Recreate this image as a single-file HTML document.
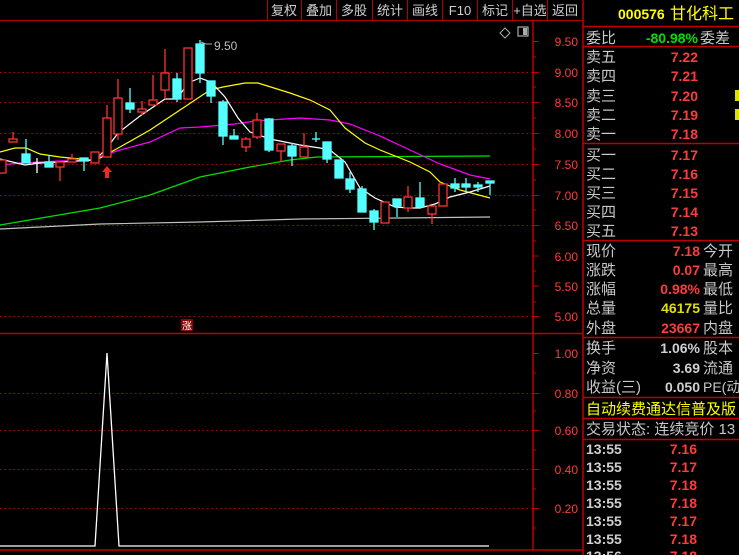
<!DOCTYPE html><html><head><meta charset="utf-8"><style>
html,body{margin:0;padding:0;background:#000;width:739px;height:555px;overflow:hidden}
svg{display:block}
text{font-family:"Liberation Sans","Noto Sans CJK SC",sans-serif}
.l{fill:#c8c8c8;font-size:15px}
.v{fill:#ff3b3b;font-size:14px;font-weight:bold;text-anchor:end}
.ax{fill:#ff3b3b;font-size:12px;text-anchor:end}
.tb{fill:#d0d0d0;font-size:13px;text-anchor:middle}
</style></head><body>
<svg width="739" height="555" viewBox="0 0 739 555" xmlns="http://www.w3.org/2000/svg">
<rect width="739" height="555" fill="#000"/>
<!-- toolbar -->
<g stroke="#b00000" stroke-width="1">
<line x1="0" y1="20.5" x2="583" y2="20.5"/>
<line x1="267.5" y1="0" x2="267.5" y2="20"/><line x1="301.5" y1="0" x2="301.5" y2="20"/><line x1="336.5" y1="0" x2="336.5" y2="20"/><line x1="372.5" y1="0" x2="372.5" y2="20"/><line x1="407.5" y1="0" x2="407.5" y2="20"/><line x1="442.5" y1="0" x2="442.5" y2="20"/><line x1="477.5" y1="0" x2="477.5" y2="20"/><line x1="512.5" y1="0" x2="512.5" y2="20"/><line x1="547.5" y1="0" x2="547.5" y2="20"/>
</g>
<g class="tb"><text x="284" y="15">复权</text><text x="319" y="15">叠加</text><text x="354" y="15">多股</text><text x="390" y="15">统计</text><text x="425" y="15">画线</text><text x="460" y="15">F10</text><text x="495" y="15">标记</text><text x="530" y="15">+自选</text><text x="565" y="15">返回</text></g>
<!-- frame -->
<g stroke="#c00000" stroke-width="1.5" fill="none">
<line x1="533" y1="21" x2="533" y2="550"/>
<line x1="583" y1="0" x2="583" y2="555"/>
<line x1="0" y1="333.5" x2="583" y2="333.5"/>
<line x1="0" y1="550" x2="583" y2="550"/>
</g>
<!-- grid -->
<g stroke="#c00000" stroke-width="1" stroke-dasharray="1.5,3">
<line x1="0" y1="72.5" x2="533" y2="72.5"/><line x1="0" y1="102.5" x2="533" y2="102.5"/><line x1="0" y1="133.5" x2="533" y2="133.5"/><line x1="0" y1="164.5" x2="533" y2="164.5"/><line x1="0" y1="195.5" x2="533" y2="195.5"/><line x1="0" y1="225.5" x2="533" y2="225.5"/><line x1="0" y1="316.5" x2="533" y2="316.5"/>
<line x1="0" y1="393.5" x2="533" y2="393.5"/><line x1="0" y1="430.5" x2="533" y2="430.5"/><line x1="0" y1="469.5" x2="533" y2="469.5"/><line x1="0" y1="508.5" x2="533" y2="508.5"/>
</g>
<!-- axis ticks -->
<g stroke="#c00000" stroke-width="1">
<line x1="533" y1="41.5" x2="539" y2="41.5"/><line x1="533" y1="57" x2="536" y2="57"/><line x1="533" y1="72.5" x2="539" y2="72.5"/><line x1="533" y1="87" x2="536" y2="87"/><line x1="533" y1="102.5" x2="539" y2="102.5"/><line x1="533" y1="118" x2="536" y2="118"/><line x1="533" y1="133.5" x2="539" y2="133.5"/><line x1="533" y1="149" x2="536" y2="149"/><line x1="533" y1="164.5" x2="539" y2="164.5"/><line x1="533" y1="180" x2="536" y2="180"/><line x1="533" y1="195.5" x2="539" y2="195.5"/><line x1="533" y1="210" x2="536" y2="210"/><line x1="533" y1="225.5" x2="539" y2="225.5"/><line x1="533" y1="241" x2="536" y2="241"/><line x1="533" y1="256" x2="539" y2="256"/><line x1="533" y1="271" x2="536" y2="271"/><line x1="533" y1="286" x2="539" y2="286"/><line x1="533" y1="302" x2="536" y2="302"/><line x1="533" y1="316.5" x2="539" y2="316.5"/>
<line x1="533" y1="353.5" x2="539" y2="353.5"/><line x1="533" y1="373" x2="536" y2="373"/><line x1="533" y1="393.5" x2="539" y2="393.5"/><line x1="533" y1="411" x2="536" y2="411"/><line x1="533" y1="430.5" x2="539" y2="430.5"/><line x1="533" y1="450" x2="536" y2="450"/><line x1="533" y1="469.5" x2="539" y2="469.5"/><line x1="533" y1="489" x2="536" y2="489"/><line x1="533" y1="508.5" x2="539" y2="508.5"/><line x1="533" y1="528" x2="536" y2="528"/>
</g>
<g class="ax"><text x="578" y="46">9.50</text><text x="578" y="77">9.00</text><text x="578" y="107">8.50</text><text x="578" y="138">8.00</text><text x="578" y="169">7.50</text><text x="578" y="200">7.00</text><text x="578" y="230">6.50</text><text x="578" y="261">6.00</text><text x="578" y="291">5.50</text><text x="578" y="321">5.00</text>
<text x="578" y="358">1.00</text><text x="578" y="398">0.80</text><text x="578" y="435">0.60</text><text x="578" y="474">0.40</text><text x="578" y="513">0.20</text></g>
<!-- icons -->
<path d="M505 28 L510 33 L505 38 L500 33 Z" fill="none" stroke="#aaa" stroke-width="1"/>
<rect x="518" y="27" width="10" height="9" fill="none" stroke="#aaa" stroke-width="1.2"/><rect x="523" y="28" width="4" height="7" fill="#aaa"/>
<!-- MA lines -->
<g fill="none" stroke-width="1.2">
<polyline stroke="#c0c0c0" points="0,229 100,224 200,222 300,219 400,218 490,217"/>
<polyline stroke="#00e000" points="0,225 100,208 150,195 200,177 250,167 290,160 317,157 490,156"/>
<polyline stroke="#ff00ff" points="0,165 20,163 40,162 60,161 90,160 120,150 150,142 180,128 200,127 235,124 255,121 270,120 300,118 330,120 350,124 380,136 410,150 440,164 470,175 490,179"/>
<polyline stroke="#ffff00" points="0,152 15,148 26,148 40,154 60,157 90,160 100,158 120,147 150,130 180,110 210,90 223,87 245,83 258,83 290,93 310,100 330,110 345,128 365,143 380,150 410,162 430,172 440,182 460,190 475,194 490,198"/>
<polyline stroke="#ffffff" points="0,159 25,165 40,163 60,162 95,160 107,148 118,133 140,116 165,99 177,99 188,83 200,78 211,82 225,97 238,118 250,132 270,139 300,145 320,148 330,150 345,162 360,188 375,198 395,207 410,208 420,208 435,204 450,197 470,192 490,186"/>
</g>
<!-- candles -->
<g stroke-width="1.3">
<g stroke="#ff3232" fill="#000">
<rect x="-2" y="160" width="8" height="13"/>
<line x1="13" y1="132" x2="13" y2="139"/><rect x="9" y="139" width="8" height="3"/>
<line x1="60" y1="167" x2="60" y2="181"/><rect x="56" y="162" width="8" height="5"/>
<line x1="72" y1="154" x2="72" y2="159"/><rect x="68" y="159" width="8" height="3"/>
<rect x="91" y="152" width="8" height="11"/>
<line x1="107" y1="105" x2="107" y2="118"/><rect x="103" y="118" width="8" height="39"/>
<line x1="118" y1="79" x2="118" y2="98"/><line x1="118" y1="134" x2="118" y2="140"/><rect x="114" y="98" width="8" height="36"/>
<line x1="142" y1="101" x2="142" y2="109"/><line x1="142" y1="112" x2="142" y2="115"/><rect x="138" y="109" width="8" height="3"/>
<line x1="153" y1="75" x2="153" y2="100"/><rect x="149" y="100" width="8" height="5"/>
<line x1="165" y1="49" x2="165" y2="73"/><line x1="165" y1="90" x2="165" y2="99"/><rect x="161" y="73" width="8" height="17"/>
<rect x="184" y="48" width="8" height="51"/>
<line x1="246" y1="137" x2="246" y2="139"/><line x1="246" y1="147" x2="246" y2="152"/><rect x="242" y="139" width="8" height="8"/>
<line x1="257" y1="113" x2="257" y2="120"/><line x1="257" y1="137" x2="257" y2="139"/><rect x="253" y="120" width="8" height="17"/>
<line x1="281" y1="151" x2="281" y2="162"/><rect x="277" y="144" width="8" height="7"/>
<line x1="304" y1="133" x2="304" y2="147"/><rect x="300" y="147" width="8" height="10"/>
<rect x="381" y="202" width="8" height="21"/>
<line x1="408" y1="186" x2="408" y2="197"/><line x1="408" y1="208" x2="408" y2="212"/><rect x="404" y="197" width="8" height="11"/>
<line x1="432" y1="214" x2="432" y2="224"/><rect x="428" y="206" width="8" height="8"/>
<rect x="439" y="184" width="8" height="22"/>
</g>
<g stroke="#54ffff" fill="#54ffff">
<line x1="26" y1="139" x2="26" y2="163"/><rect x="22" y="154" width="8" height="9"/>
<line x1="49" y1="156" x2="49" y2="167"/><rect x="45" y="162" width="8" height="5"/>
<line x1="84" y1="158" x2="84" y2="171"/><rect x="80" y="158" width="8" height="3"/>
<line x1="130" y1="88" x2="130" y2="113"/><rect x="126" y="103" width="8" height="6"/>
<line x1="177" y1="73" x2="177" y2="102"/><rect x="173" y="79" width="8" height="20"/>
<line x1="200" y1="40" x2="200" y2="83"/><rect x="196" y="44" width="8" height="29"/>
<line x1="211" y1="81" x2="211" y2="103"/><rect x="207" y="81" width="8" height="15"/>
<line x1="223" y1="100" x2="223" y2="145"/><rect x="219" y="102" width="8" height="34"/>
<line x1="234" y1="129" x2="234" y2="139"/><rect x="230" y="136" width="8" height="3"/>
<line x1="269" y1="118" x2="269" y2="152"/><rect x="265" y="119" width="8" height="31"/>
<line x1="292" y1="143" x2="292" y2="166"/><rect x="288" y="146" width="8" height="10"/>
<line x1="316" y1="132" x2="316" y2="142"/><line x1="312" y1="139" x2="320" y2="139"/>
<line x1="327" y1="142" x2="327" y2="163"/><rect x="323" y="142" width="8" height="17"/>
<rect x="335" y="160" width="8" height="18"/>
<line x1="350" y1="172" x2="350" y2="193"/><rect x="346" y="179" width="8" height="10"/>
<line x1="362" y1="186" x2="362" y2="212"/><rect x="358" y="189" width="8" height="23"/>
<line x1="374" y1="209" x2="374" y2="230"/><rect x="370" y="211" width="8" height="11"/>
<line x1="397" y1="199" x2="397" y2="217"/><rect x="393" y="199" width="8" height="7"/>
<line x1="420" y1="182" x2="420" y2="208"/><rect x="416" y="198" width="8" height="9"/>
<line x1="455" y1="178" x2="455" y2="192"/><rect x="451" y="184" width="8" height="4"/>
<line x1="466" y1="178" x2="466" y2="192"/><rect x="462" y="184" width="8" height="3"/>
<line x1="478" y1="182" x2="478" y2="192"/><rect x="474" y="185" width="8" height="2"/>
<line x1="490" y1="181" x2="490" y2="195"/><rect x="486" y="181" width="8" height="2"/>
</g>
<g stroke="#fff"><line x1="37" y1="158" x2="37" y2="173"/><line x1="33" y1="163" x2="41" y2="163"/></g>
</g>
<!-- arrow -->
<path d="M107 166 L112 172 L109 172 L109 178 L105 178 L105 172 L102 172 Z" fill="#ff2020"/>
<!-- 9.50 label -->
<path d="M201 42 L206 44 L212 44" stroke="#aaa" fill="none" stroke-width="1"/>
<text x="214" y="50" fill="#c0c0c0" font-size="12">9.50</text>
<!-- 涨 marker -->
<rect x="181" y="319" width="12" height="12" fill="#8b0000"/>
<text x="187" y="329.5" fill="#fff" font-size="10" text-anchor="middle">涨</text>
<!-- lower line -->
<polyline fill="none" stroke="#fff" stroke-width="1.3" points="0,546 95,546 107,353 119,546 489,546"/>
<!-- right panel -->
<g stroke="#c00000" stroke-width="1.5">
<line x1="583" y1="26.5" x2="739" y2="26.5"/><line x1="583" y1="46.5" x2="739" y2="46.5"/><line x1="583" y1="143.5" x2="739" y2="143.5"/><line x1="583" y1="240.5" x2="739" y2="240.5"/><line x1="583" y1="337.5" x2="739" y2="337.5"/><line x1="583" y1="397.5" x2="739" y2="397.5"/><line x1="583" y1="418.5" x2="739" y2="418.5"/><line x1="583" y1="439.5" x2="739" y2="439.5"/>
</g>
<text x="618" y="19" fill="#ffff00" font-size="14" font-weight="bold">000576</text>
<text x="670" y="19" fill="#ffff00" font-size="16">甘化科工</text>
<g class="l">
<text x="586" y="43">委比</text><text x="700" y="43">委差</text>
<text x="586" y="62">卖五</text><text x="586" y="81">卖四</text><text x="586" y="101">卖三</text><text x="586" y="120">卖二</text><text x="586" y="139">卖一</text>
<text x="586" y="160">买一</text><text x="586" y="179">买二</text><text x="586" y="198">买三</text><text x="586" y="217">买四</text><text x="586" y="236">买五</text>
<text x="586" y="256">现价</text><text x="703" y="256">今开</text>
<text x="586" y="275">涨跌</text><text x="703" y="275">最高</text>
<text x="586" y="294">涨幅</text><text x="703" y="294">最低</text>
<text x="586" y="313">总量</text><text x="703" y="313">量比</text>
<text x="586" y="333">外盘</text><text x="703" y="333">内盘</text>
<text x="586" y="353">换手</text><text x="703" y="353">股本</text>
<text x="586" y="373">净资</text><text x="703" y="373">流通</text>
<text x="586" y="392">收益(三)</text><text x="703" y="392" font-size="14">PE(动</text>
<text x="586" y="434">交易状态: 连续竞价 13</text>
</g>
<text x="586" y="414" fill="#ffff00" font-size="15">自动续费通达信普及版</text>
<text x="698" y="43" fill="#00e000" font-size="14" font-weight="bold" text-anchor="end">-80.98%</text>
<g class="v">
<text x="698" y="62">7.22</text><text x="698" y="81">7.21</text><text x="698" y="101">7.20</text><text x="698" y="120">7.19</text><text x="698" y="139">7.18</text>
<text x="698" y="160">7.17</text><text x="698" y="179">7.16</text><text x="698" y="198">7.15</text><text x="698" y="217">7.14</text><text x="698" y="236">7.13</text>
<text x="700" y="256">7.18</text><text x="700" y="275">0.07</text><text x="700" y="294">0.98%</text>
<text x="700" y="313" style="fill:#e0e000">46175</text><text x="700" y="333">23667</text>
<text x="700" y="353" style="fill:#d0d0d0">1.06%</text><text x="700" y="373" style="fill:#d0d0d0">3.69</text><text x="700" y="392" style="fill:#d0d0d0">0.050</text>
</g>
<rect x="735" y="90" width="4" height="11" fill="#e0e000"/><rect x="735" y="109" width="4" height="11" fill="#e0e000"/>
<g fill="#d0d0d0" font-size="14" font-weight="bold">
<text x="586" y="454">13:55</text><text x="586" y="472">13:55</text><text x="586" y="490">13:55</text><text x="586" y="508">13:55</text><text x="586" y="526">13:55</text><text x="586" y="544">13:55</text><text x="586" y="561">13:56</text>
</g>
<g class="v">
<text x="697" y="454">7.16</text><text x="697" y="472">7.17</text><text x="697" y="490">7.18</text><text x="697" y="508">7.18</text><text x="697" y="526">7.17</text><text x="697" y="544">7.18</text><text x="697" y="561">7.18</text>
</g>
</svg>
</body></html>
